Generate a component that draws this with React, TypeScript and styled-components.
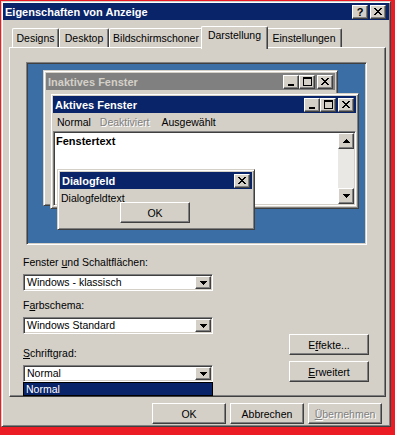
import React from 'react';
import styled, { createGlobalStyle, css } from 'styled-components';

const C = {
  face: '#D4D0C8',
  light: '#FFFFFF',
  shadow: '#808080',
  dark: '#404040',
  navy: '#0A246A',
  desk: '#3A6EA5',
  red: '#EC1C24',
  track: '#EAE8E4',
};

const GlobalStyle = createGlobalStyle`
  html, body { margin: 0; padding: 0; background: ${C.red}; }
  body {
    font-family: 'Liberation Sans', Arial, sans-serif;
    font-size: 10.5px;
    color: #000;
  }
  #root { padding: 1px 0 0 1px; }
  * { box-sizing: border-box; }
`;

const raised = css`
  background: ${C.face};
  border: 1px solid;
  border-color: ${C.light} ${C.dark} ${C.dark} ${C.light};
  box-shadow: inset -1px -1px ${C.shadow};
`;

const frame = css`
  background: ${C.face};
  border: 1px solid;
  border-color: ${C.face} ${C.dark} ${C.dark} ${C.face};
  box-shadow: inset 1px 1px ${C.light}, inset -1px -1px ${C.shadow};
`;

const sunken = css`
  border: 1px solid;
  border-color: ${C.shadow} ${C.light} ${C.light} ${C.shadow};
  box-shadow: inset 1px 1px ${C.dark}, inset -1px -1px ${C.face};
`;

/* ---------- pixel glyphs ---------- */
const Pixels: React.FC<{ map: string[] }> = ({ map }) => {
  const h = map.length;
  const w = map[0].length;
  const rects: React.ReactNode[] = [];
  map.forEach((row, y) =>
    row.split('').forEach((ch, x) => {
      if (ch === '#') rects.push(<rect key={`${x}-${y}`} x={x} y={y} width={1} height={1} />);
    })
  );
  return (
    <svg width={w} height={h} viewBox={`0 0 ${w} ${h}`} shapeRendering="crispEdges" fill="currentColor">
      {rects}
    </svg>
  );
};

const G_CLOSE = ['##....##', '.##..##.', '..####..', '...##...', '..####..', '.##..##.', '##....##'];
const G_MIN = ['......', '......', '......', '......', '......', '......', '......', '######', '######'];
const G_MAX = ['#########', '#########', '#.......#', '#.......#', '#.......#', '#.......#', '#.......#', '#.......#', '#########'];
const G_DOWN = ['#######', '.#####.', '..###..', '...#...'];
const G_UP = ['...#...', '..###..', '.#####.', '#######'];

/* ---------- window chrome ---------- */
const Window = styled.div`
  ${frame};
  width: 390px;
  height: 426px;
  padding: 1px;
  display: flex;
  flex-direction: column;
`;

const TitleBar = styled.div<{ $inactive?: boolean }>`
  height: 17px;
  flex: none;
  display: flex;
  align-items: center;
  padding: 0 ${p => (p.$inactive ? 2 : 3)}px 0 1px;
  background: ${p => (p.$inactive ? C.shadow : C.navy)};
  color: ${p => (p.$inactive ? C.face : '#fff')};
  font-weight: bold;
  font-size: 11px;
  white-space: nowrap;
`;

const TitleText = styled.span`
  flex: 1;
  overflow: hidden;
  padding-left: 1px;
`;

const CaptionButton = styled.span<{ $gap?: boolean }>`
  ${raised};
  width: 16px;
  height: 14px;
  flex: none;
  display: flex;
  align-items: center;
  justify-content: center;
  margin-left: ${p => (p.$gap ? 2 : 0)}px;
  color: #000;
  font-size: 11px;
  font-weight: bold;
  line-height: 12px;
`;

/* ---------- tabs ---------- */
const TabRow = styled.div`
  display: flex;
  align-items: flex-end;
  height: 21px;
  margin-top: 6px;
  padding-left: 9px;
  flex: none;
`;

const Tab = styled.div<{ $active?: boolean; $w: number }>`
  position: relative;
  z-index: ${p => (p.$active ? 2 : 1)};
  width: ${p => p.$w}px;
  height: ${p => (p.$active ? 23 : 19)}px;
  margin: ${p => (p.$active ? '0 -2px -2px -2px' : '0')};
  padding-top: ${p => (p.$active ? 2 : 3)}px;
  background: ${C.face};
  border-top: 1px solid ${C.light};
  border-left: 1px solid ${C.light};
  border-right: 1px solid ${C.dark};
  border-radius: 2px 2px 0 0;
  box-shadow: inset -1px 0 ${C.shadow};
  text-align: center;
  line-height: 13px;
  white-space: nowrap;
`;

const Panel = styled.div`
  margin-left: 6px;
  width: 377px;
  height: 350px;
  flex: none;
  background: ${C.face};
  border: 1px solid;
  border-color: ${C.light} ${C.dark} ${C.dark} ${C.light};
  box-shadow: inset -1px -1px ${C.shadow};
  display: flex;
  flex-direction: column;
`;

/* ---------- preview ---------- */
const Preview = styled.div`
  ${sunken};
  position: relative;
  margin: 14px 0 0 16px;
  width: 341px;
  height: 183px;
  flex: none;
  background: ${C.desk};
  overflow: hidden;
`;

const MiniWindow = styled.div<{ $x: number; $y: number; $w: number; $h: number }>`
  ${frame};
  position: absolute;
  left: ${p => p.$x}px;
  top: ${p => p.$y}px;
  width: ${p => p.$w}px;
  height: ${p => p.$h}px;
  padding: 2px;
  display: flex;
  flex-direction: column;
`;

const MenuBar = styled.div`
  height: 18px;
  flex: none;
  display: flex;
  align-items: center;
  padding-left: 4px;
  white-space: nowrap;
`;

const MenuItem = styled.span<{ $ml?: number }>`
  margin-left: ${p => p.$ml ?? 0}px;
`;

const Disabled = styled.span<{ $ml?: number }>`
  margin-left: ${p => p.$ml ?? 0}px;
  color: ${C.shadow};
  text-shadow: 1px 1px ${C.light};
`;

const Client = styled.div`
  ${sunken};
  flex: 1;
  background: #fff;
  display: flex;
  padding: 1px;
`;

const ClientText = styled.div`
  flex: 1;
  padding: 2px 0 0 1px;
  font-weight: bold;
  font-size: 11px;
  line-height: 13px;
`;

const ScrollBar = styled.div`
  width: 16px;
  flex: none;
  display: flex;
  flex-direction: column;
  background: ${C.track};
`;

const ScrollButton = styled.div`
  ${raised};
  width: 16px;
  height: 16px;
  flex: none;
  display: flex;
  align-items: center;
  justify-content: center;
`;

const ScrollTrack = styled.div`
  flex: 1;
`;

const DialogBody = styled.div`
  flex: 1;
  padding: 3px 0 0 1px;
  line-height: 13px;
  white-space: nowrap;
`;

const DialogOk = styled.div`
  ${raised};
  position: absolute;
  left: 62px;
  top: 32px;
  width: 70px;
  height: 21px;
  display: flex;
  align-items: center;
  justify-content: center;
`;

/* ---------- form ---------- */
const FormArea = styled.div`
  display: flex;
  justify-content: space-between;
  align-items: flex-end;
  padding: 0 16px 0 13px;
  margin-top: 11px;
`;

const Fields = styled.div`
  width: 190px;
  display: flex;
  flex-direction: column;
`;

const Field = styled.div<{ $mt: number }>`
  margin-top: ${p => p.$mt}px;
  display: flex;
  flex-direction: column;
  gap: 5px;
`;

const Label = styled.div`
  height: 13px;
  line-height: 13px;
  white-space: nowrap;
`;

const Select = styled.div`
  ${sunken};
  position: relative;
  height: 17px;
  background: #fff;
  display: flex;
  align-items: center;
  padding: 1px;
`;

const SelectValue = styled.span`
  flex: 1;
  padding-left: 2px;
  line-height: 13px;
  white-space: nowrap;
`;

const ArrowButton = styled.span`
  ${raised};
  width: 16px;
  height: 13px;
  flex: none;
  display: flex;
  align-items: center;
  justify-content: center;
`;

const DropList = styled.div`
  position: absolute;
  z-index: 5;
  top: 100%;
  left: -1px;
  right: -1px;
  margin-top: 1px;
  height: 14px;
  border: 1px solid #000;
  background: ${C.navy};
  color: #fff;
  padding-left: 2px;
  line-height: 12px;
`;

const SideButtons = styled.div`
  display: flex;
  flex-direction: column;
  gap: 6px;
`;

const PushButton = styled.div<{ $w: number; $disabled?: boolean }>`
  ${raised};
  width: ${p => p.$w}px;
  height: 21px;
  display: flex;
  align-items: center;
  justify-content: center;
  white-space: nowrap;
  color: ${p => (p.$disabled ? C.shadow : '#000')};
  text-shadow: ${p => (p.$disabled ? `1px 1px ${C.light}` : 'none')};
`;

const ButtonRow = styled.div`
  display: flex;
  justify-content: flex-end;
  gap: 4px;
  margin-top: 6px;
  padding-right: 7px;
  flex: none;
`;

const Captions: React.FC<{ min?: boolean }> = ({ min = true }) =>
  min ? (
    <>
      <CaptionButton><Pixels map={G_MIN} /></CaptionButton>
      <CaptionButton><Pixels map={G_MAX} /></CaptionButton>
      <CaptionButton $gap><Pixels map={G_CLOSE} /></CaptionButton>
    </>
  ) : (
    <CaptionButton><Pixels map={G_CLOSE} /></CaptionButton>
  );

const tabs = [
  { label: 'Designs', w: 47 },
  { label: 'Desktop', w: 50 },
  { label: 'Bildschirmschoner', w: 94 },
  { label: 'Darstellung', w: 67, active: true },
  { label: 'Einstellungen', w: 76 },
];

export default function App() {
  return (
    <>
      <GlobalStyle />
      <Window>
        <TitleBar>
          <TitleText>Eigenschaften von Anzeige</TitleText>
          <CaptionButton>?</CaptionButton>
          <CaptionButton $gap><Pixels map={G_CLOSE} /></CaptionButton>
        </TitleBar>

        <TabRow>
          {tabs.map(t => (
            <Tab key={t.label} $w={t.w} $active={t.active}>{t.label}</Tab>
          ))}
        </TabRow>

        <Panel>
          <Preview>
            <MiniWindow $x={16} $y={7} $w={295} $h={136}>
              <TitleBar $inactive>
                <TitleText>Inaktives Fenster</TitleText>
                <Captions />
              </TitleBar>
            </MiniWindow>

            <MiniWindow $x={23} $y={30} $w={309} $h={116}>
              <TitleBar $inactive={false} style={{ paddingRight: 2 }}>
                <TitleText>Aktives Fenster</TitleText>
                <Captions />
              </TitleBar>
              <MenuBar>
                <MenuItem>Normal</MenuItem>
                <Disabled $ml={9}>Deaktiviert</Disabled>
                <MenuItem $ml={12}>Ausgewählt</MenuItem>
              </MenuBar>
              <Client>
                <ClientText>Fenstertext</ClientText>
                <ScrollBar>
                  <ScrollButton><Pixels map={G_UP} /></ScrollButton>
                  <ScrollTrack />
                  <ScrollButton><Pixels map={G_DOWN} /></ScrollButton>
                </ScrollBar>
              </Client>
            </MiniWindow>

            <MiniWindow $x={30} $y={106} $w={198} $h={61}>
              <TitleBar style={{ paddingRight: 2 }}>
                <TitleText>Dialogfeld</TitleText>
                <Captions min={false} />
              </TitleBar>
              <DialogBody>Dialogfeldtext</DialogBody>
              <DialogOk>OK</DialogOk>
            </MiniWindow>
          </Preview>

          <FormArea>
            <Fields>
              <Field $mt={0}>
                <Label>Fenster <u>u</u>nd Schaltflächen:</Label>
                <Select>
                  <SelectValue>Windows - klassisch</SelectValue>
                  <ArrowButton><Pixels map={G_DOWN} /></ArrowButton>
                </Select>
              </Field>
              <Field $mt={8}>
                <Label>F<u>a</u>rbschema:</Label>
                <Select>
                  <SelectValue>Windows Standard</SelectValue>
                  <ArrowButton><Pixels map={G_DOWN} /></ArrowButton>
                </Select>
              </Field>
              <Field $mt={13}>
                <Label><u>S</u>chriftgrad:</Label>
                <Select>
                  <SelectValue>Normal</SelectValue>
                  <ArrowButton><Pixels map={G_DOWN} /></ArrowButton>
                  <DropList>Normal</DropList>
                </Select>
              </Field>
            </Fields>
            <SideButtons>
              <PushButton $w={80}>E<u>f</u>fekte...</PushButton>
              <PushButton $w={80}><u>E</u>rweitert</PushButton>
            </SideButtons>
          </FormArea>
        </Panel>

        <ButtonRow>
          <PushButton $w={74}>OK</PushButton>
          <PushButton $w={74}>Abbrechen</PushButton>
          <PushButton $w={74} $disabled><u>Ü</u>bernehmen</PushButton>
        </ButtonRow>
      </Window>
    </>
  );
}
